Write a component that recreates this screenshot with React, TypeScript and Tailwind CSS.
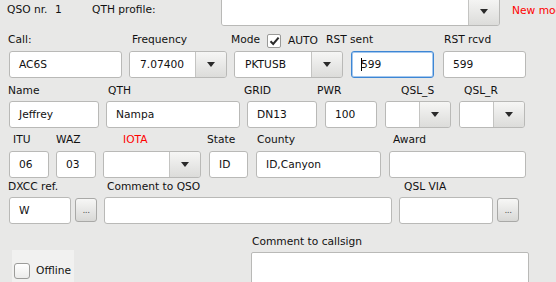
import React from "react";

function Field({ cls, value, focus }: { cls: string; value?: string; focus?: boolean }) {
  return (
    <div
      className={`${cls} h-[27px] shrink-0 bg-white rounded-[3px] flex items-center whitespace-nowrap ${
        focus
          ? "border border-[#3d86d4] shadow-[inset_0_0_0_1px_rgba(90,155,225,0.55)] pl-[9px]"
          : "border border-[#b9b9b7] pl-[9px]"
      }`}
    >
      {focus && <span className="inline-block w-[1px] h-[13px] bg-black -mr-[1px]" />}
      {value}
    </div>
  );
}

function Arrow() {
  return <div className="w-0 h-0 border-x-[4px] border-x-transparent border-t-[5px] border-t-[#2a2a2a]" />;
}

function Combo({ cls, value, h }: { cls: string; value?: string; h?: string }) {
  return (
    <div className={`${cls} ${h ?? "h-[27px]"} shrink-0 flex border border-[#b9b9b7] rounded-[3px] overflow-hidden`}>
      <div className="flex-1 bg-white flex items-center pl-[10px] whitespace-nowrap">{value}</div>
      <div className="w-[31px] border-l border-[#c4c4c2] bg-linear-to-b from-[#f6f6f5] to-[#dcdcda] flex items-center justify-center">
        <Arrow />
      </div>
    </div>
  );
}

function Dots() {
  return (
    <div className="w-[22px] h-[24px] mt-[1px] shrink-0 rounded-[3px] border border-[#a9a9a7] bg-linear-to-b from-[#f7f7f6] to-[#d8d8d6] flex items-center justify-center text-[9px] text-[#555] leading-none tracking-[-0.5px]">
      ...
    </div>
  );
}

export default function App() {
  return (
    <div className="w-[556px] h-[282px] overflow-hidden bg-[#e8e8e7] text-[10.67px] leading-[14px] text-[#111] font-['DejaVu_Sans',sans-serif]">
      {/* Row 0 */}
      <div className="flex items-start h-[26px] whitespace-nowrap">
        <span className="ml-[7px] mt-[3px] w-[48px] shrink-0">QSO nr.</span>
        <span className="mt-[3px] w-[37px] shrink-0">1</span>
        <span className="mt-[3px] w-[129px] shrink-0">QTH profile:</span>
        <Combo cls="w-[279px] -mt-[3px]" h="h-[29px]" />
        <span className="ml-[12px] mt-[4px] text-[#ff0000]">New mode</span>
      </div>

      {/* Row 1 labels */}
      <div className="flex items-center h-[14px] mt-[7px] pl-[8px] whitespace-nowrap">
        <span className="w-[124px] shrink-0">Call:</span>
        <span className="w-[99px] shrink-0">Frequency</span>
        <span className="w-[36px] shrink-0">Mode</span>
        <span className="w-[21px] shrink-0 flex">
          <span className="w-[14px] h-[14px] mt-[1px] bg-white border border-[#9a9a98] rounded-[2px] flex items-center justify-center">
            <svg width="11" height="10" viewBox="0 0 11 10">
              <path d="M1.5 5.2 L4.2 8 L9.6 1.6" fill="none" stroke="#2b2b2b" strokeWidth="2" />
            </svg>
          </span>
        </span>
        <span className="w-[38px] shrink-0 mt-[2px]">AUTO</span>
        <span className="w-[118px] shrink-0">RST sent</span>
        <span className="shrink-0">RST rcvd</span>
      </div>
      {/* Row 1 controls */}
      <div className="flex mt-[4px] h-[27px]">
        <Field cls="ml-[9px] w-[113px]" value="AC6S" />
        <Combo cls="ml-[7px] w-[98px]" value="7.07400" />
        <Combo cls="ml-[7px] w-[109px]" value="PKTUSB" />
        <Field cls="ml-[8px] w-[83px]" value="599" focus />
        <Field cls="ml-[9px] w-[83px]" value="599" />
      </div>

      {/* Row 2 labels */}
      <div className="flex items-center h-[14px] mt-[6px] pl-[8px] whitespace-nowrap">
        <span className="w-[100px] shrink-0">Name</span>
        <span className="w-[136px] shrink-0">QTH</span>
        <span className="w-[73px] shrink-0">GRID</span>
        <span className="w-[84px] shrink-0">PWR</span>
        <span className="w-[63px] shrink-0">QSL_S</span>
        <span className="shrink-0">QSL_R</span>
      </div>
      {/* Row 2 controls */}
      <div className="flex mt-[3px] h-[27px]">
        <Field cls="ml-[9px] w-[90px]" value="Jeffrey" />
        <Field cls="ml-[7px] w-[134px]" value="Nampa" />
        <Field cls="ml-[7px] w-[70px]" value="DN13" />
        <Field cls="ml-[8px] w-[52px]" value="100" />
        <Combo cls="ml-[8px] w-[66px]" />
        <Combo cls="ml-[8px] w-[66px]" />
      </div>

      {/* Row 3 labels */}
      <div className="flex items-center h-[14px] mt-[5px] pl-[13px] whitespace-nowrap">
        <span className="w-[43px] shrink-0">ITU</span>
        <span className="w-[67px] shrink-0">WAZ</span>
        <span className="w-[84px] shrink-0 text-[#ff0000]">IOTA</span>
        <span className="w-[50px] shrink-0">State</span>
        <span className="w-[136px] shrink-0">County</span>
        <span className="shrink-0">Award</span>
      </div>
      {/* Row 3 controls */}
      <div className="flex mt-[4px] h-[27px]">
        <Field cls="ml-[9px] w-[40px]" value="06" />
        <Field cls="ml-[7px] w-[40px]" value="03" />
        <Combo cls="ml-[7px] w-[98px]" />
        <Field cls="ml-[8px] w-[39px]" value="ID" />
        <Field cls="ml-[8px] w-[125px]" value="ID,Canyon" />
        <Field cls="ml-[8px] w-[137px]" />
      </div>

      {/* Row 4 labels */}
      <div className="flex items-center h-[14px] mt-[2px] pl-[8px] whitespace-nowrap">
        <span className="w-[99px] shrink-0">DXCC ref.</span>
        <span className="w-[297px] shrink-0">Comment to QSO</span>
        <span className="shrink-0">QSL VIA</span>
      </div>
      {/* Row 4 controls */}
      <div className="flex mt-[3px] h-[27px]">
        <Field cls="ml-[9px] w-[62px]" value="W" />
        <div className="ml-[4px] flex">
          <Dots />
        </div>
        <Field cls="ml-[7px] w-[288px]" />
        <Field cls="ml-[7px] w-[94px]" />
        <div className="ml-[4px] flex">
          <Dots />
        </div>
      </div>

      {/* Row 5 */}
      <div className="flex items-start">
        <div className="ml-[12px] mt-[26px] w-[62px] h-[32px] shrink-0 bg-[#f1f1f0] flex items-start whitespace-nowrap">
          <div className="ml-[2px] mt-[13px] w-[16px] h-[16px] shrink-0 rounded-[3px] border border-[#9c9c9a] bg-linear-to-b from-white to-[#ececeb]" />
          <span className="ml-[6px] mt-[14px]">Offline</span>
        </div>
        <div className="ml-[177px] mt-[11px] flex flex-col">
          <span className="pl-[1px] whitespace-nowrap">Comment to callsign</span>
          <div className="mt-[3px] w-[278px] h-[40px] bg-white border border-[#b9b9b7] rounded-[2px]" />
        </div>
      </div>
    </div>
  );
}
